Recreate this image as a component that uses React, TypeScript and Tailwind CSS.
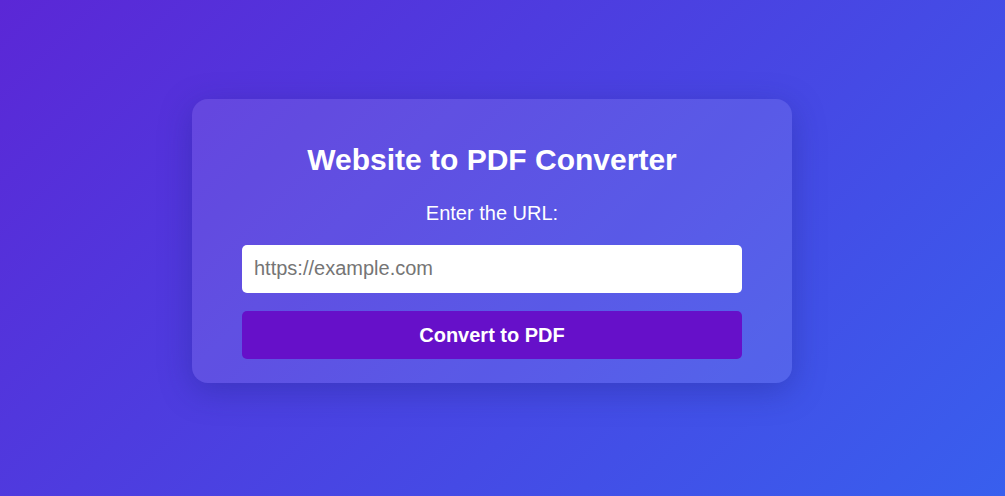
import React from "react";

export default function App() {
  return (
    <div
      className="w-full h-[496px] flex items-center justify-center pb-[14px] pr-[21px] bg-[linear-gradient(135deg,#5b27d6,#385fee)]"
      style={{ fontFamily: '"Liberation Sans", Arial, sans-serif' }}
    >
      <div className="w-[600px] rounded-[16px] bg-white/10 shadow-[0_8px_32px_rgba(31,38,135,0.37)] px-[50px] pt-[44px] pb-[24px] flex flex-col items-center">
        <h1 className="text-[30px] leading-[34.5px] font-bold text-white mb-[24px]">
          Website to PDF Converter
        </h1>
        <label className="text-[20px] leading-[23px] text-white mb-[20px]">
          Enter the URL:
        </label>
        <input
          type="text"
          placeholder="https://example.com"
          className="w-full h-[48px] rounded-[5px] bg-white px-[12px] text-[20px] text-black placeholder:text-[#757575] outline-none mb-[18px]"
        />
        <button className="w-full h-[48px] rounded-[5px] bg-[#6610c9] text-white text-[20px] font-bold">
          Convert to PDF
        </button>
      </div>
    </div>
  );
}
